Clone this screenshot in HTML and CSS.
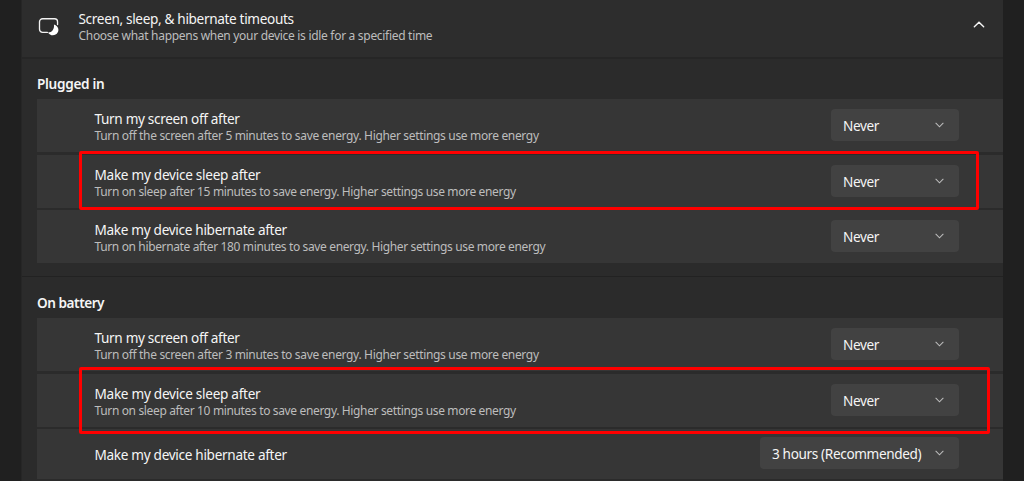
FILE: index.html
```
<!DOCTYPE html>
<html lang="en">
<head>
<meta charset="utf-8">
<title>Power settings</title>
<link rel="stylesheet" href="styles.css">
</head>
<body>
<svg class="defs" width="0" height="0"><defs>
<symbol id="chev" viewBox="0 0 10 6"><path d="M1 1l4 4 4-4" fill="none" stroke="currentColor" stroke-width="1.2" stroke-linecap="round"/></symbol>
</defs></svg>
<main class="panel">
  <header class="head">
    <svg class="icon" viewBox="0 0 22 20"><path d="M9.300 16.200H4.200A3.200 3.200 0 0 1 1 13V5a3.200 3.200 0 0 1 3.200-3.200h12.600A3.200 3.200 0 0 1 20 5v3" fill="none" stroke="#f2f2f2" stroke-width="1.4" stroke-linecap="round"/><path d="M16.200 7.800c2.600.8 4.700 2.900 4.700 5.700 0 3.300-2.600 5.700-5.700 5.700-2.300 0-4.200-1.200-5.200-3 3.900.2 6.900-3.500 6.200-8.400z" fill="#fff"/></svg>
    <div class="text">
      <div class="title t-head">Screen, sleep, &amp; hibernate timeouts</div>
      <div class="sub s-head">Choose what happens when your device is idle for a specified time</div>
    </div>
    <svg class="up"><use href="#chev"/></svg>
  </header>
  <section class="group">
    <h2 class="h-plug">Plugged in</h2>
    <div class="row">
      <div class="text"><div class="title t-off">Turn my screen off after</div><div class="sub">Turn off the screen after 5 minutes to save energy. Higher settings use more energy</div></div>
      <div class="select"><span>Never</span><svg class="down"><use href="#chev"/></svg></div>
    </div>
    <div class="row">
      <div class="text"><div class="title t-sleep">Make my device sleep after</div><div class="sub s-sleep">Turn on sleep after 15 minutes to save energy. Higher settings use more energy</div></div>
      <div class="select"><span>Never</span><svg class="down"><use href="#chev"/></svg></div>
      <div class="mark mark-plug"></div>
    </div>
    <div class="row last">
      <div class="text"><div class="title t-hib">Make my device hibernate after</div><div class="sub s-hib">Turn on hibernate after 180 minutes to save energy. Higher settings use more energy</div></div>
      <div class="select"><span>Never</span><svg class="down"><use href="#chev"/></svg></div>
    </div>
  </section>
  <section class="group battery">
    <h2 class="h-bat">On battery</h2>
    <div class="row">
      <div class="text"><div class="title t-off">Turn my screen off after</div><div class="sub">Turn off the screen after 3 minutes to save energy. Higher settings use more energy</div></div>
      <div class="select"><span>Never</span><svg class="down"><use href="#chev"/></svg></div>
    </div>
    <div class="row">
      <div class="text"><div class="title t-sleep">Make my device sleep after</div><div class="sub s-sleep">Turn on sleep after 10 minutes to save energy. Higher settings use more energy</div></div>
      <div class="select"><span>Never</span><svg class="down"><use href="#chev"/></svg></div>
      <div class="mark mark-bat"></div>
    </div>
    <div class="row last short">
      <div class="text"><div class="title t-hib">Make my device hibernate after</div></div>
      <div class="select wide"><span>3 hours (Recommended)</span><svg class="down"><use href="#chev"/></svg></div>
    </div>
  </section>
</main>
</body>
</html>
```
FILE: styles.css
```
* { box-sizing: border-box; }
body {
  margin: 0;
  height: 481px;
  overflow: hidden;
  background: #202020;
  color: #f5f5f5;
  font-family: "Noto Sans", "Open Sans", sans-serif;
}
.defs { display: block; }
.panel {
  width: 982px;
  height: 481px;
  margin-left: 21px;
  background: #2b2b2b;
  border-left: 1px solid #262626;
  overflow: hidden;
}
.head {
  display: flex;
  height: 59px;
  padding: 10px 18px 0 15px;
  background: #2d2d2d;
  border-bottom: 2px solid #262626;
}
.icon { width: 22px; height: 19px; margin: 7px 18.5px 0 1px; }
.text { flex: 1; white-space: nowrap; }
.title { font-size: 13.6px; line-height: 17px; }
.sub { margin-top: 1px; font-size: 12px; line-height: 16px; color: #bdbdbd; letter-spacing: -0.335px; }
.t-head { letter-spacing: -0.34px; }
.t-sleep { letter-spacing: -0.28px; }
.t-hib { letter-spacing: -0.31px; }
.t-off { letter-spacing: -0.34px; }
.s-head { letter-spacing: -0.3px; }
.s-sleep { letter-spacing: -0.355px; }
.s-hib { letter-spacing: -0.365px; }
.up { width: 12px; height: 7px; margin-top: 11px; transform: rotate(180deg); }
.group { padding: 16px 0 13px 15px; }
.battery { padding-top: 17px; border-top: 1px solid #222; }
h2 { margin: 0 0 6px; font-size: 13.6px; line-height: 18px; font-weight: 600; letter-spacing: -0.3px; }
.h-bat { letter-spacing: -0.46px; }
.row {
  position: relative;
  display: flex;
  align-items: flex-start;
  height: 53px;
  margin-bottom: 3px;
  padding: 10px 44px 0 57.5px;
  background: #363636;
}
.row + .row { margin-bottom: 2px; }
.row.last { margin-bottom: 0; }
.row .title { margin-top: 1px; }
.row.short { height: 50px; }
.row.short .title { margin-top: 7px; }
.select {
  display: flex;
  align-items: center;
  justify-content: space-between;
  width: 128px;
  height: 32px;
  padding: 0 15px 0 12px;
  background: #424242;
  border-radius: 4px;
  font-size: 13.6px;
  letter-spacing: -0.36px;
  white-space: nowrap;
}
.wide { width: 199px; margin-top: -2px; }
.down { width: 9px; height: 6px; color: #bcbcbc; }
.mark { position: absolute; z-index: 1; left: 41.5px; border: 3px solid #ff0000; border-radius: 2px; }
.mark-plug { top: -4px; width: 900px; height: 59px; }
.mark-bat { top: -7px; width: 911px; height: 67px; }
```
